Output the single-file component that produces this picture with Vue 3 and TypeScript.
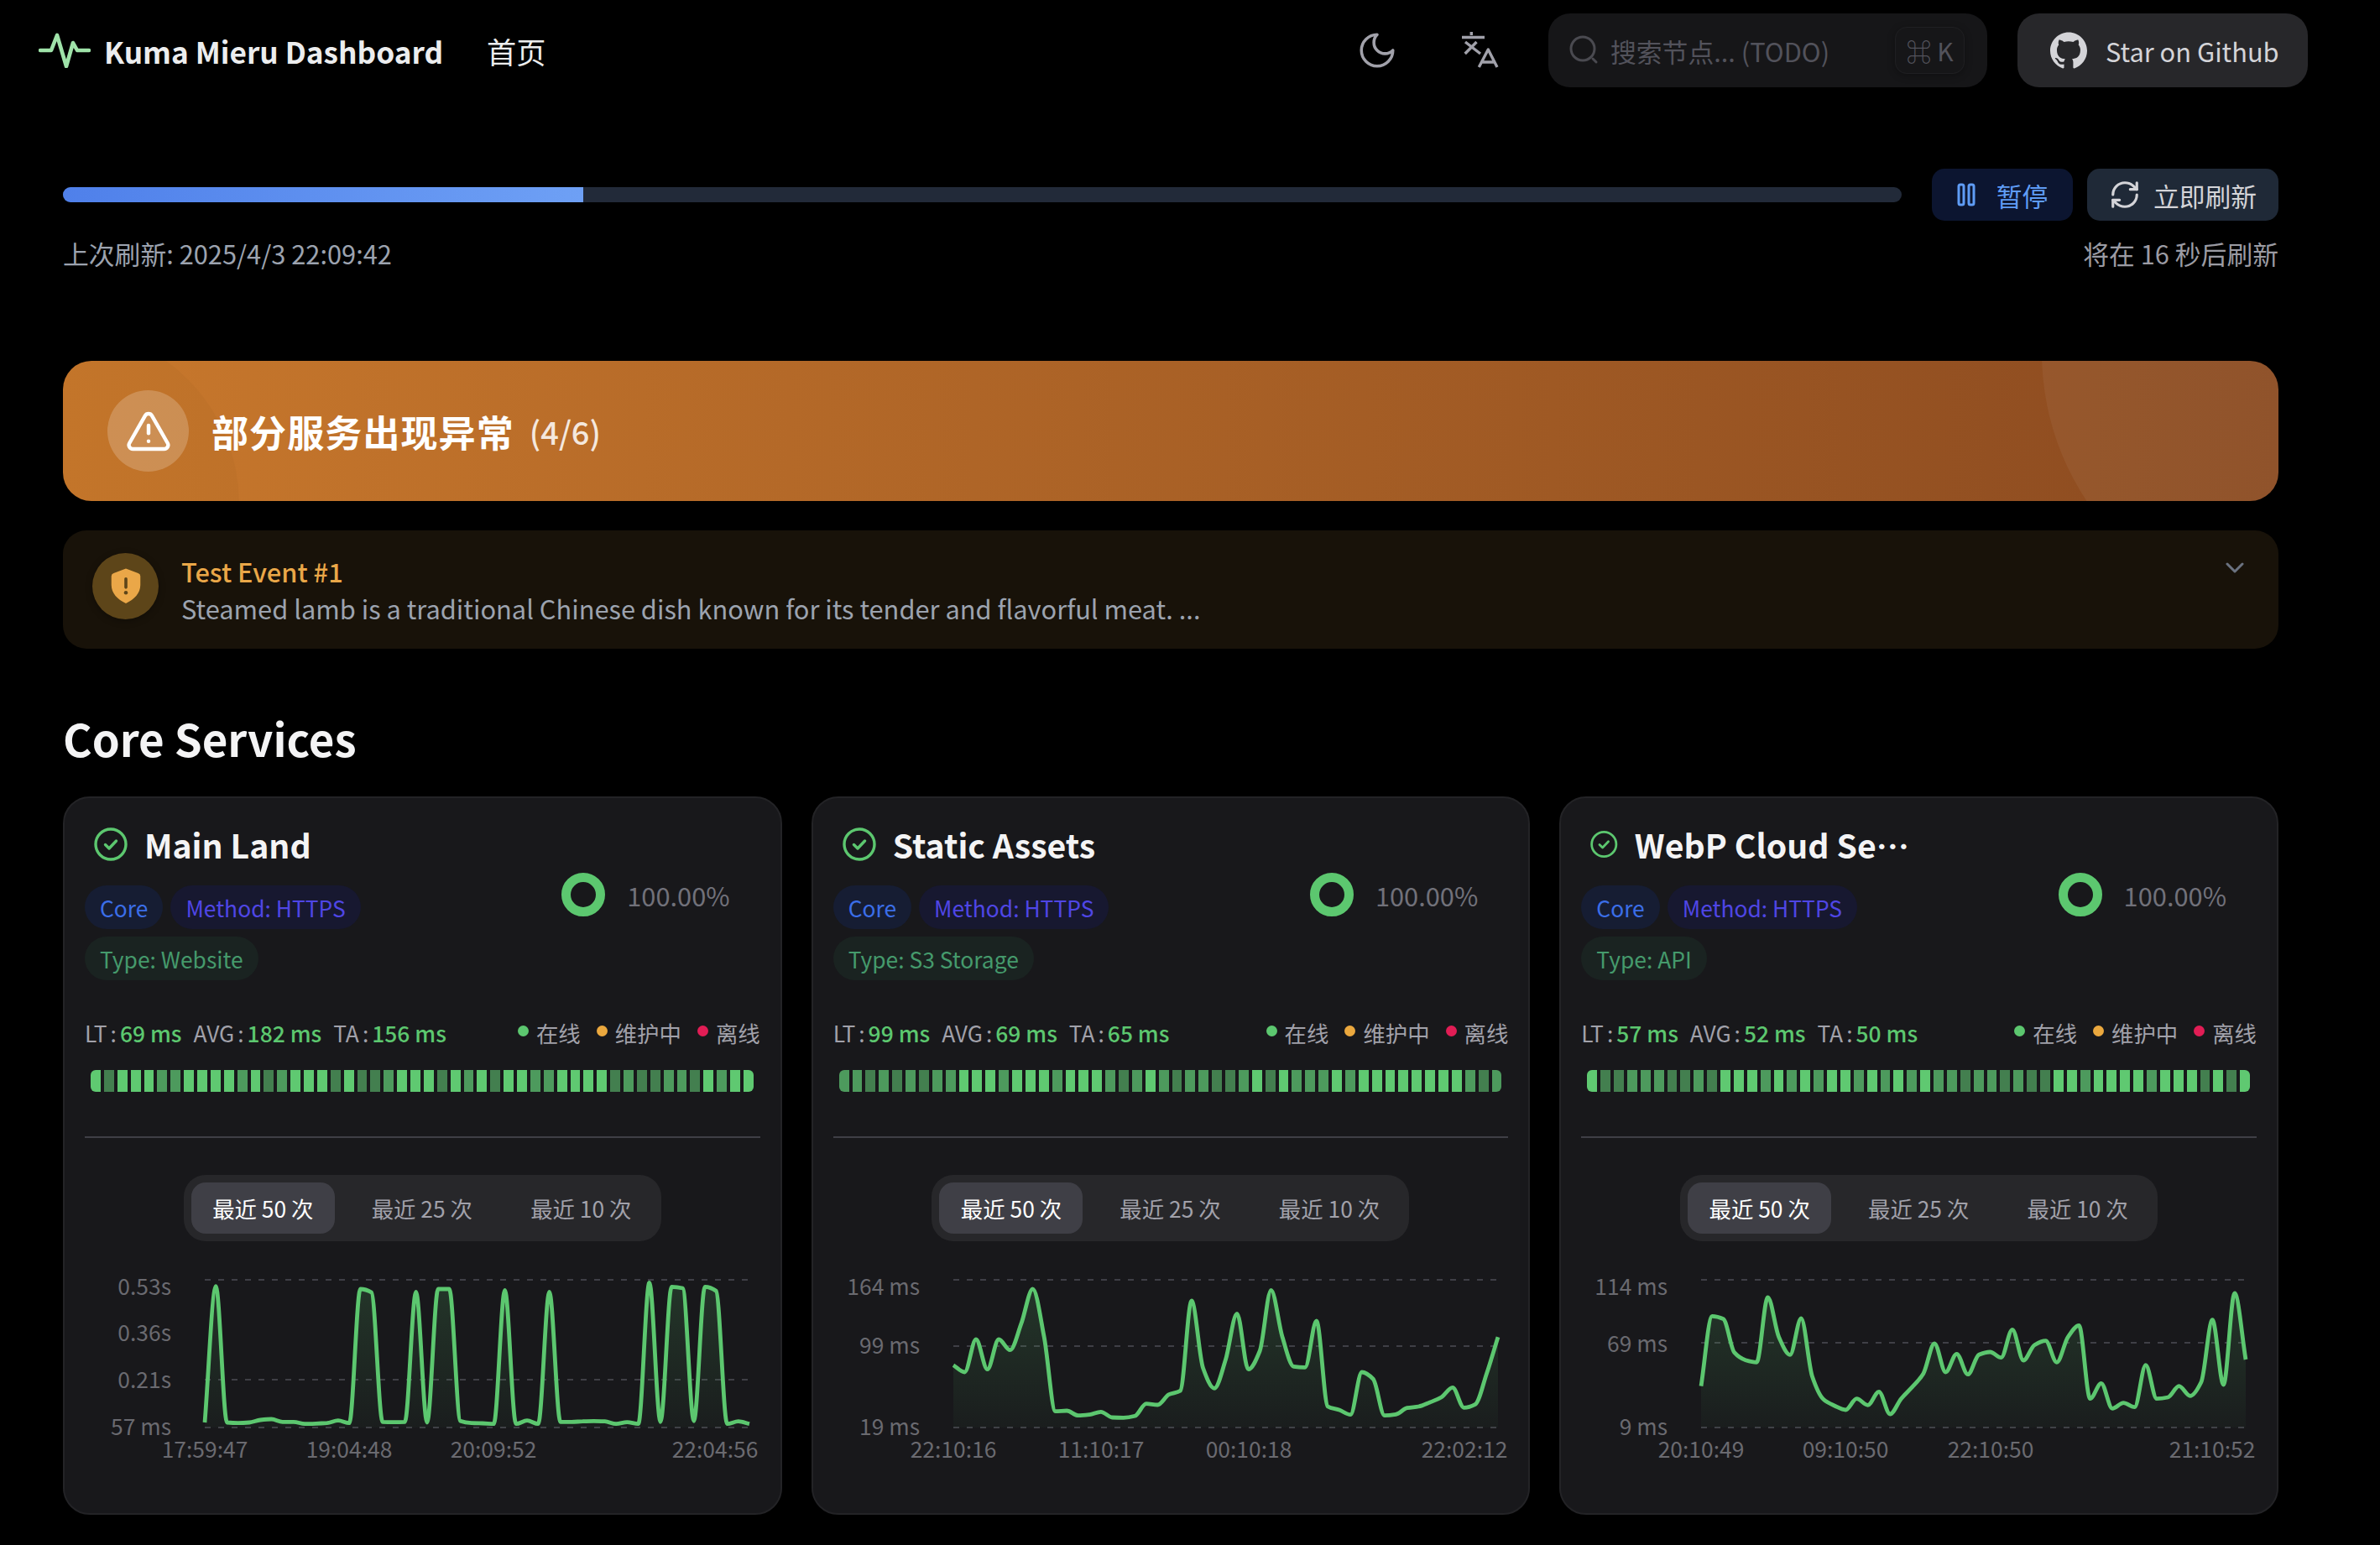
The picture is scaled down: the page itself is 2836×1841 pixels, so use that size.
<script setup lang="ts">
interface Chart {
  // y positions read as offsets: 0 = top grid line, 175.7 = bottom grid line
  points: number[]
  grid: number[]
  yLabels: { y: number; text: string }[]
  xLabels: { x: number; text: string }[]
}

interface Service {
  id: string
  name: string
  type: string
  stats: { label: string; value: string }[]
  bars: string
  chart: Chart
}

const PLOT_LEFT = 143
const PLOT_RIGHT = 792
const PLOT_TOP = 25

const toOffsets = (list: number[]) => list.map((v) => (v - 435) / 3)

const services: Service[] = [
  {
    id: 'main',
    name: 'Main Land',
    type: 'Type: Website',
    stats: [
      { label: 'LT', value: '69 ms' },
      { label: 'AVG', value: '182 ms' },
      { label: 'TA', value: '156 ms' },
    ],
    bars: 'bdbbbmmbbbbmbdmbbbdbddmbbbdbmbdbbmmbbbbdmddmmdbmbb',
    chart: {
      points: toOffsets([
        945, 458, 945, 947, 945, 936, 933, 943, 943, 950, 949, 947, 938, 947, 468, 480, 943, 944, 943, 478,
        945, 468, 468, 940, 947, 948, 950, 472, 950, 938, 950, 478, 943, 943, 941, 940, 941, 950, 944, 950,
        445, 943, 460, 465, 940, 460, 475, 950, 941, 950,
      ]),
      grid: [25, 144, 201],
      yLabels: [
        { y: 31, text: '0.53s' },
        { y: 86, text: '0.36s' },
        { y: 142, text: '0.21s' },
        { y: 198, text: '57 ms' },
      ],
      xLabels: [
        { x: 143, text: '17:59:47' },
        { x: 315, text: '19:04:48' },
        { x: 487, text: '20:09:52' },
        { x: 751, text: '22:04:56' },
      ],
    },
  },
  {
    id: 'static',
    name: 'Static Assets',
    type: 'Type: S3 Storage',
    stats: [
      { label: 'LT', value: '99 ms' },
      { label: 'AVG', value: '69 ms' },
      { label: 'TA', value: '65 ms' },
    ],
    bars: 'mmdmdmdmmbbbmbbbmbbbmdmbmdmmddmbdbmmmbmbbbbbbbbmdm',
    chart: {
      points: toOffsets([
        740, 765, 648, 755, 648, 686, 590, 468, 640, 905, 903, 920, 917, 907, 927, 928, 922, 878, 882, 845,
        832, 510, 750, 823, 720, 556, 755, 690, 472, 640, 745, 748, 582, 888, 900, 917, 765, 790, 920, 916,
        893, 888, 873, 855, 820, 892, 880, 770, 640,
      ]),
      grid: [25, 104, 201],
      yLabels: [
        { y: 31, text: '164 ms' },
        { y: 101, text: '99 ms' },
        { y: 198, text: '19 ms' },
      ],
      xLabels: [
        { x: 143, text: '22:10:16' },
        { x: 319, text: '11:10:17' },
        { x: 495, text: '00:10:18' },
        { x: 752, text: '22:02:12' },
      ],
    },
  },
  {
    id: 'webp',
    name: 'WebP Cloud Services',
    type: 'Type: API',
    stats: [
      { label: 'LT', value: '57 ms' },
      { label: 'AVG', value: '52 ms' },
      { label: 'TA', value: '50 ms' },
    ],
    bars: 'bddmmmddmdbbbmbmbmbbmbmbmbmmdmmdmddbbmbbbbmbbbdbdb',
    chart: {
      points: toOffsets([
        815, 565, 575, 695, 722, 730, 498, 640, 703, 573, 780, 862, 885, 900, 860, 883, 835, 915, 860, 818,
        770, 663, 765, 700, 773, 703, 693, 713, 613, 723, 668, 653, 730, 640, 598, 860, 805, 895, 875, 890,
        740, 860, 855, 815, 850, 800, 578, 810, 483, 720,
      ]),
      grid: [25, 100, 201],
      yLabels: [
        { y: 31, text: '114 ms' },
        { y: 99, text: '69 ms' },
        { y: 198, text: '9 ms' },
      ],
      xLabels: [
        { x: 143, text: '20:10:49' },
        { x: 315, text: '09:10:50' },
        { x: 488, text: '22:10:50' },
        { x: 752, text: '21:10:52' },
      ],
    },
  },
]

const tabs = ['最近 50 次', '最近 25 次', '最近 10 次']

const barColor: Record<string, string> = { b: 'bar-on', m: 'bar-mid', d: 'bar-dim' }

// monotone cubic through the samples, same shape as the d3 curve
function linePath(points: number[]) {
  const step = (PLOT_RIGHT - PLOT_LEFT) / (points.length - 1)
  const ys = points.map((v) => v + PLOT_TOP)
  const slopes = ys.slice(1).map((y, i) => (y - ys[i]) / step)
  const tangents = ys.map((_, i) => {
    if (i === 0) return slopes[0]
    if (i === ys.length - 1) return slopes[i - 1]
    const a = slopes[i - 1]
    const b = slopes[i]
    if (a * b <= 0) return 0
    return (2 * a * b) / (a + b)
  })
  let d = `M${PLOT_LEFT} ${ys[0].toFixed(1)}`
  for (let i = 1; i < ys.length; i++) {
    const x0 = PLOT_LEFT + (i - 1) * step
    const x1 = x0 + step
    const c0 = ys[i - 1] + (tangents[i - 1] * step) / 3
    const c1 = ys[i] - (tangents[i] * step) / 3
    d += `C${(x0 + step / 3).toFixed(1)} ${c0.toFixed(1)} ${(x1 - step / 3).toFixed(1)} ${c1.toFixed(1)} ${x1.toFixed(1)} ${ys[i].toFixed(1)}`
  }
  return d
}

function areaPath(points: number[]) {
  return `${linePath(points)}L${PLOT_RIGHT} 201L${PLOT_LEFT} 201Z`
}
</script>

<template>
  <div class="page">
    <nav class="navbar">
      <div class="brand">
        <svg class="logo" width="62" height="42" viewBox="0 0 62 42" fill="none">
          <path d="M2 21h13L22 3l11 37 8-28 5 9h14" stroke="#9fe3a9" stroke-width="4.6" stroke-linecap="round" stroke-linejoin="round" />
        </svg>
        <span class="brand-name">Kuma Mieru Dashboard</span>
        <a class="nav-link">首页</a>
      </div>
      <div class="nav-right">
        <svg class="moon" width="50" height="50" viewBox="0 0 24 24" fill="none" stroke="#a1a1aa" stroke-width="1.7" stroke-linecap="round" stroke-linejoin="round">
          <path d="M12 3a6 6 0 0 0 9 9 9 9 0 1 1-9-9Z" />
        </svg>
        <svg class="lang" width="46" height="46" viewBox="0 0 46 46" fill="none" stroke="#a1a1aa" stroke-width="3.4" stroke-linejoin="round">
          <path d="M12.3 1v4M1 7.5h27M18.5 13 4.7 27M5 13l18 14M21.3 43l11-21 10.700 21M25 37h14" />
        </svg>
        <div class="search">
          <svg width="36" height="36" viewBox="0 0 36 36" fill="none" stroke="#4a4a50" stroke-width="3" stroke-linecap="round">
            <circle cx="16" cy="16" r="14" />
            <path d="M28 28l4 4" />
          </svg>
          <span class="search-text">搜索节点... (TODO)</span>
          <kbd class="kbd">⌘ K</kbd>
        </div>
        <a class="star">
          <svg width="44" height="44" viewBox="0 0 24 24" fill="#d4d4d8">
            <path d="M12 .297c-6.630 0-12 5.373-12 12 0 5.303 3.438 9.800 8.205 11.385.6.113.820-.258.820-.577 0-.285-.010-1.040-.015-2.040-3.338.724-4.042-1.610-4.042-1.610C4.422 18.070 3.633 17.700 3.633 17.700c-1.087-.744.084-.729.084-.729 1.205.084 1.838 1.236 1.838 1.236 1.070 1.835 2.809 1.305 3.495.998.108-.776.417-1.305.760-1.605-2.665-.300-5.466-1.332-5.466-5.930 0-1.310.465-2.380 1.235-3.220-.135-.303-.540-1.523.105-3.176 0 0 1.005-.322 3.300 1.230.960-.267 1.980-.399 3-.405 1.020.006 2.040.138 3 .405 2.280-1.552 3.285-1.230 3.285-1.230.645 1.653.240 2.873.120 3.176.765.840 1.230 1.910 1.230 3.220 0 4.610-2.805 5.625-5.475 5.920.420.360.810 1.096.810 2.220 0 1.606-.015 2.896-.015 3.286 0 .315.210.690.825.570C20.565 22.092 24 17.592 24 12.297c0-6.627-5.373-12-12-12" />
          </svg>
          <span>Star on Github</span>
        </a>
      </div>
    </nav>

    <main class="content">
      <section class="refresh">
        <div class="refresh-row">
          <div class="progress"><div class="progress-fill" /></div>
          <button class="btn btn-pause">
            <svg width="22" height="28" viewBox="0 0 22 28" fill="none" stroke="#5f9cf5" stroke-width="3">
              <rect x="2" y="2" width="6" height="24" rx="2" />
              <rect x="14" y="2" width="6" height="24" rx="2" />
            </svg>
            <span>暂停</span>
          </button>
          <button class="btn btn-refresh">
            <svg width="38" height="38" viewBox="0 0 24 24" fill="none" stroke="#d4d4d8" stroke-width="2" stroke-linecap="round" stroke-linejoin="round">
              <path d="M3 12a9 9 0 0 1 9-9 9.750 9.750 0 0 1 6.740 2.740L21 8" />
              <path d="M21 3v5h-5" />
              <path d="M21 12a9 9 0 0 1-9 9 9.750 9.750 0 0 1-6.740-2.740L3 16" />
              <path d="M8 16H3v5" />
            </svg>
            <span>立即刷新</span>
          </button>
        </div>
        <div class="refresh-meta">
          <span class="last">上次刷新: 2025/4/3 22:09:42</span>
          <span class="next">将在 16 秒后刷新</span>
        </div>
      </section>

      <section class="banner">
        <span class="banner-circle banner-circle-left" />
        <span class="banner-circle banner-circle-right" />
        <div class="banner-icon">
          <svg width="56" height="56" viewBox="0 0 24 24" fill="none" stroke="#fff" stroke-width="1.900" stroke-linecap="round" stroke-linejoin="round">
            <path d="m21.730 18-8-14a2 2 0 0 0-3.480 0l-8 14A2 2 0 0 0 4 21h16a2 2 0 0 0 1.730-3" />
            <path d="M12 9v4" />
            <path d="M12 17h.01" />
          </svg>
        </div>
        <h2 class="banner-title">部分服务出现异常</h2>
        <span class="banner-count">(4/6)</span>
      </section>

      <section class="event">
        <div class="event-icon">
          <svg width="40" height="44" viewBox="0 0 44 48" fill="none">
            <path d="M22 1.500 38 7.500a4 4 0 0 1 3 3.800V23c0 11-8 19-19 24C11 42 3 34 3 23V11.300a4 4 0 0 1 3-3.800Z" fill="#eaa748" />
            <rect x="20" y="13" width="4" height="15" rx="2" fill="#5d4519" />
            <circle cx="22" cy="33" r="2.500" fill="#5d4519" />
          </svg>
        </div>
        <div class="event-body">
          <div class="event-title">Test Event #1</div>
          <div class="event-desc">Steamed lamb is a traditional Chinese dish known for its tender and flavorful meat. ...</div>
        </div>
        <svg class="event-chevron" width="22" height="13" viewBox="0 0 22 13" fill="none" stroke="#6b7280" stroke-width="3" stroke-linecap="round" stroke-linejoin="round">
          <path d="M2 2l9 9 9-9" />
        </svg>
      </section>

      <h1 class="group-title">Core Services</h1>

      <div class="cards">
        <article v-for="service in services" :key="service.id" class="card">
          <div class="card-top">
            <div class="card-info">
              <div class="card-name">
                <svg class="check" width="40" height="40" viewBox="0 0 40 40" fill="none" stroke="#5cc76f" stroke-linecap="round" stroke-linejoin="round">
                  <circle cx="20" cy="20" r="18" stroke-width="3.400" />
                  <path d="M13.500 20.500l4.500 4.500 8.500-9" stroke-width="3.400" />
                </svg>
                <span class="name-text">{{ service.name }}</span>
              </div>
              <div class="chips">
                <span class="chip chip-core">Core</span>
                <span class="chip chip-method">Method: HTTPS</span>
                <span class="chip chip-type">{{ service.type }}</span>
              </div>
            </div>
            <div class="uptime">
              <span class="ring" />
              <span class="uptime-text">100.00%</span>
            </div>
          </div>

          <div class="stat-row">
            <div class="stats">
              <span v-for="stat in service.stats" :key="stat.label" class="stat">
                <span class="stat-label">{{ stat.label }}</span>
                <span class="stat-colon">:</span>
                <span class="stat-value">{{ stat.value }}</span>
              </span>
            </div>
            <div class="legend">
              <span class="legend-item"><i class="dot dot-online" />在线</span>
              <span class="legend-item"><i class="dot dot-maint" />维护中</span>
              <span class="legend-item"><i class="dot dot-off" />离线</span>
            </div>
          </div>

          <div class="bars">
            <span v-for="(b, i) in service.bars.split('')" :key="i" class="bar" :class="barColor[b]" />
          </div>

          <div class="divider" />

          <div class="tabs">
            <span v-for="(tab, i) in tabs" :key="tab" class="tab" :class="{ active: i === 0 }">{{ tab }}</span>
          </div>

          <svg class="chart" width="804" height="250" viewBox="0 0 804 250">
            <defs>
              <linearGradient :id="`fill-${service.id}`" x1="0" y1="0" x2="0" y2="1">
                <stop offset="0%" stop-color="#5cc76f" stop-opacity="0.17" />
                <stop offset="100%" stop-color="#5cc76f" stop-opacity="0.03" />
              </linearGradient>
            </defs>
            <line v-for="y in service.chart.grid" :key="y" :x1="PLOT_LEFT" :x2="PLOT_RIGHT" :y1="y" :y2="y" class="grid-line" />
            <path :d="areaPath(service.chart.points)" :fill="`url(#fill-${service.id})`" />
            <path :d="linePath(service.chart.points)" class="chart-line" />
            <text v-for="l in service.chart.yLabels" :key="l.text" x="103" :y="l.y" class="axis" text-anchor="end" dominant-baseline="central">{{ l.text }}</text>
            <text v-for="l in service.chart.xLabels" :key="l.text" :x="l.x" y="225" class="axis" text-anchor="middle" dominant-baseline="central">{{ l.text }}</text>
          </svg>
        </article>
      </div>
    </main>
  </div>
</template>

<style>
html,
body {
  margin: 0;
  background: #000;
}
</style>

<style scoped>
.page {
  width: 2836px;
  height: 1841px;
  overflow: hidden;
  background: #000;
  color: #ecedee;
  font-family: 'Noto Sans CJK SC', 'Noto Sans', sans-serif;
}

.navbar {
  height: 120px;
  padding: 16px 86px 16px 46px;
  box-sizing: border-box;
  display: flex;
  justify-content: space-between;
  align-items: flex-start;
}

.brand {
  height: 88px;
  display: flex;
  align-items: center;
}

.logo {
  flex-shrink: 0;
}

.brand-name {
  margin-left: 16px;
  font-size: 35.200px;
  font-weight: 700;
  color: #ecedee;
}

.nav-link {
  margin-left: 52px;
  font-size: 35.200px;
  color: #ecedee;
}

.nav-right {
  display: flex;
  align-items: center;
  height: 88px;
}

.moon {
  margin-right: 75px;
}

.lang {
  margin-right: 58px;
}

.search {
  width: 523px;
  height: 88px;
  box-sizing: border-box;
  padding: 0 27px 0 25px;
  display: flex;
  align-items: center;
  background: #161618;
  border-radius: 26px;
  color: #52525b;
}

.search-text {
  margin-left: 13px;
  font-size: 30.800px;
  flex: 1;
}

.kbd {
  width: 81px;
  height: 54px;
  display: flex;
  align-items: center;
  justify-content: center;
  border: 1px solid #1f1f22;
  border-radius: 14px;
  box-shadow: 0 2px 10px rgba(0, 0, 0, 0.3);
  font-family: 'Noto Sans CJK SC', 'DejaVu Sans', sans-serif;
  font-size: 30px;
  color: #52525b;
}

.star {
  width: 346px;
  height: 88px;
  margin-left: 36px;
  box-sizing: border-box;
  padding-left: 39px;
  display: flex;
  align-items: center;
  gap: 22px;
  background: #27272a;
  border-radius: 26px;
  color: #d4d4d8;
  font-size: 30.800px;
}

.content {
  padding: 81px 121px 0 75px;
}

.refresh-row {
  display: flex;
  align-items: center;
}

.progress {
  flex: 1;
  height: 18px;
  margin-right: 36px;
  border-radius: 9px;
  background: #222a39;
  overflow: hidden;
}

.progress-fill {
  width: 620px;
  height: 100%;
  background: linear-gradient(90deg, #4f80ea, #6ea0f5);
}

.btn {
  height: 62px;
  border: none;
  border-radius: 15px;
  display: flex;
  align-items: center;
  justify-content: center;
  font-family: inherit;
  font-size: 30.800px;
}

.btn-pause {
  width: 168px;
  padding-left: 6px;
  gap: 25px;
  background: #0c1530;
  color: #5f9cf5;
}

.btn-refresh {
  width: 228px;
  margin-left: 17px;
  gap: 15px;
  background: #1f2937;
  color: #d4d4d8;
}

.refresh-meta {
  margin-top: 17px;
  display: flex;
  justify-content: space-between;
  font-size: 30.800px;
  line-height: 44px;
}

.last {
  color: #9ca3af;
}

.next {
  color: #9b9ba3;
}

.banner {
  position: relative;
  overflow: hidden;
  height: 167px;
  margin-top: 106px;
  padding-left: 53px;
  display: flex;
  align-items: center;
  border-radius: 34px;
  background: linear-gradient(90deg, #c8782c, #8b4a20);
  color: #fff;
}

.banner-circle {
  position: absolute;
  border-radius: 50%;
}

.banner-circle-left {
  width: 420px;
  height: 420px;
  left: -210px;
  top: -40px;
  background: rgba(0, 0, 0, 0.025);
}

.banner-circle-right {
  width: 640px;
  height: 640px;
  left: 2358px;
  top: -330px;
  background: rgba(255, 255, 255, 0.05);
}

.banner-icon {
  position: relative;
  width: 97px;
  height: 97px;
  flex-shrink: 0;
  display: flex;
  align-items: center;
  justify-content: center;
  border-radius: 50%;
  background: rgba(255, 255, 255, 0.2);
}

.banner-title {
  position: relative;
  margin: 0 0 0 27px;
  font-size: 44px;
  letter-spacing: 1.100px;
  font-weight: 700;
}

.banner-count {
  position: relative;
  margin-left: 18px;
  font-size: 38px;
  font-weight: 500;
  color: rgba(255, 255, 255, 0.85);
}

.event {
  position: relative;
  height: 141px;
  margin-top: 35px;
  padding-left: 35px;
  display: flex;
  align-items: center;
  border-radius: 28px;
  background: #181209;
}

.event-icon {
  width: 79px;
  height: 79px;
  margin-bottom: 9px;
  flex-shrink: 0;
  display: flex;
  align-items: center;
  justify-content: center;
  border-radius: 50%;
  background: #5d4519;
  box-shadow: 0 2px 8px rgba(0, 0, 0, 0.3);
}

.event-body {
  margin-left: 27px;
}

.event-title {
  font-size: 30.800px;
  line-height: 44px;
  font-weight: 500;
  color: #eaa748;
}

.event-desc {
  font-size: 30.800px;
  line-height: 44px;
  color: #9ca3af;
}

.event-chevron {
  position: absolute;
  right: 41px;
  top: 38px;
}

.group-title {
  margin: 66px 0 0;
  font-size: 52.800px;
  line-height: 80px;
  font-weight: 600;
  color: #f4f4f5;
}

.cards {
  margin-top: 30px;
  display: grid;
  grid-template-columns: repeat(3, minmax(0, 1fr));
  gap: 35px;
}

.card {
  height: 856px;
  box-sizing: border-box;
  padding: 35px 24px 0;
  border: 2px solid #232326;
  border-radius: 32px;
  background: #18181b;
}

.card-top {
  height: 183px;
  display: flex;
  justify-content: space-between;
}

.card-info {
  width: 397px;
}

.card-name {
  height: 40px;
  padding-left: 11px;
  display: flex;
  align-items: center;
  gap: 20px;
}

.check {
  flex-shrink: 1.100;
}

.name-text {
  min-width: 0;
  overflow: hidden;
  white-space: nowrap;
  text-overflow: ellipsis;
  font-size: 39.200px;
  line-height: 56px;
  font-weight: 600;
  color: #f4f4f5;
}

.chips {
  margin-top: 29px;
  display: flex;
  flex-wrap: wrap;
  gap: 9px;
}

.chip {
  height: 52px;
  padding: 0 18px;
  display: flex;
  align-items: center;
  border-radius: 26px;
  font-size: 26.400px;
}

.chip-core {
  background: #161d33;
  color: #3b6ee8;
}

.chip-method {
  background: #171830;
  color: #4f46e5;
}

.chip-type {
  background: #1a2321;
  color: #459a6c;
}

.uptime {
  height: 52px;
  margin-top: 54px;
  margin-right: 36px;
  display: flex;
  align-items: center;
  gap: 26px;
}

.ring {
  width: 52px;
  height: 52px;
  box-sizing: border-box;
  border: 11px solid #5cc76f;
  border-radius: 50%;
}

.uptime-text {
  font-size: 30.800px;
  color: #71717a;
}

.stat-row {
  height: 40px;
  margin-top: 41px;
  display: flex;
  justify-content: space-between;
  align-items: center;
  font-size: 26.400px;
}

.stats {
  display: flex;
  gap: 14px;
}

.stat {
  display: flex;
  gap: 4px;
}

.stat-label,
.stat-colon {
  color: #a1a1aa;
}

.stat-value {
  color: #5cc76f;
  font-weight: 500;
}

.legend {
  display: flex;
  gap: 19px;
  color: #a1a1aa;
  font-size: 26.400px;
}

.legend-item {
  display: flex;
  align-items: center;
  gap: 9px;
}

.dot {
  width: 13px;
  height: 13px;
  border-radius: 50%;
  margin-bottom: 3px;
}

.dot-online {
  background: #5cc76f;
}

.dot-maint {
  background: #eba83e;
}

.dot-off {
  background: #e11d55;
}

.bars {
  height: 26px;
  margin: 25px 8px 0 7px;
  display: flex;
  gap: 4px;
  border-radius: 6px;
  overflow: hidden;
}

.bar {
  flex: 1;
}

.bar-on {
  background: #5fc971;
}

.bar-mid {
  background: #4d9a5d;
}

.bar-dim {
  background: #437f4f;
}

.divider {
  height: 2px;
  margin-top: 53px;
  background: #3f3f46;
}

.tabs {
  width: 569px;
  height: 79px;
  margin: 44px auto 0;
  padding: 0 9px;
  box-sizing: border-box;
  display: flex;
  align-items: center;
  gap: 18.500px;
  border-radius: 26px;
  background: #27272a;
}

.tab {
  width: 171px;
  height: 61px;
  display: flex;
  align-items: center;
  justify-content: center;
  border-radius: 17px;
  font-size: 26.400px;
  color: #a1a1aa;
}

.tab.active {
  background: #3f3f46;
  color: #fff;
}

.chart {
  display: block;
  margin-top: 21px;
}

.grid-line {
  stroke: #3f3f46;
  stroke-width: 2;
  stroke-dasharray: 7 9;
}

.chart-line {
  fill: none;
  stroke: #5cc76f;
  stroke-width: 4.800px;
  stroke-linejoin: round;
}

.axis {
  fill: #6a6a70;
  font-size: 26.400px;
}
</style>
